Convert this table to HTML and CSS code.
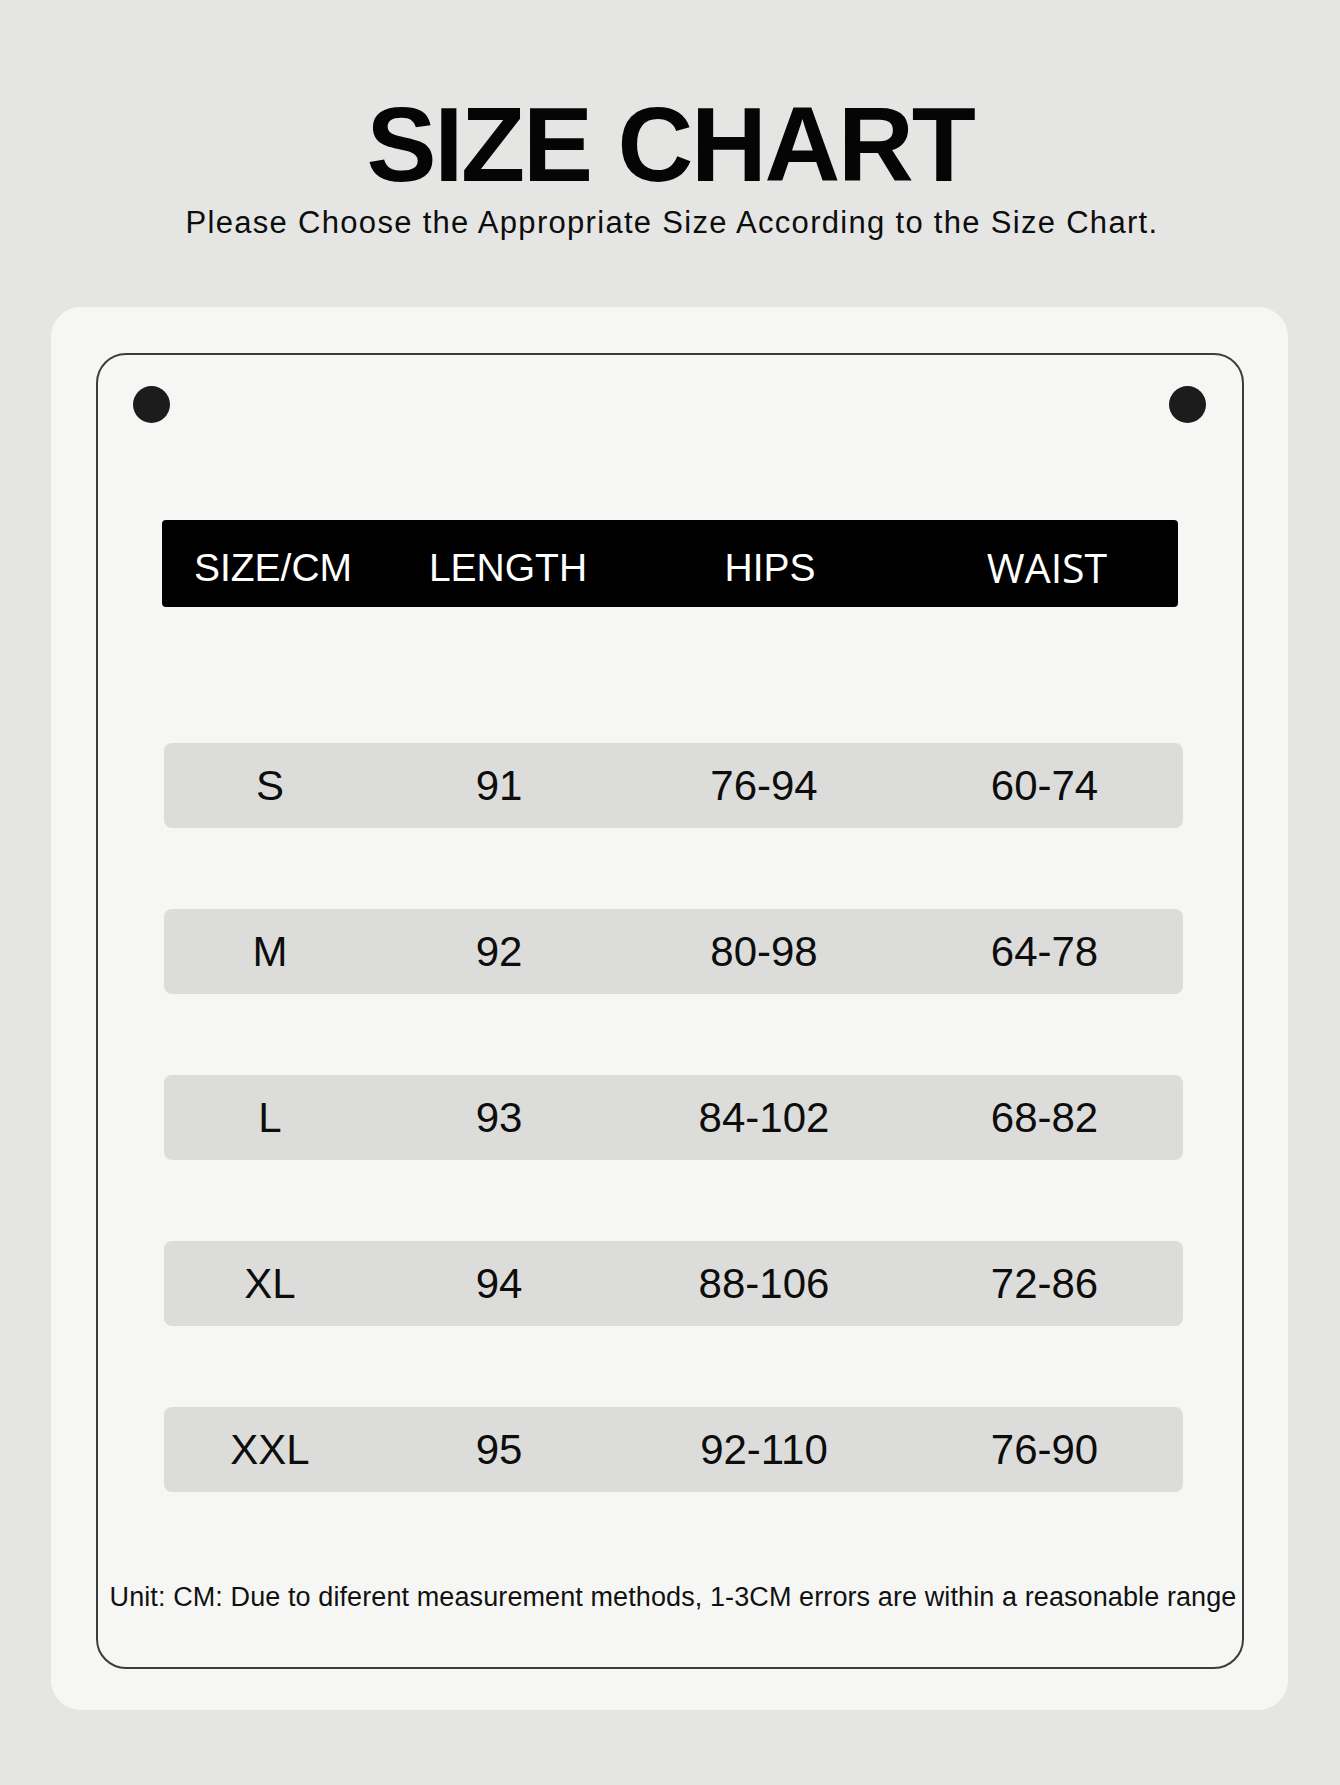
FILE: index.html
```html
<!DOCTYPE html>
<html lang="en">
<head>
<meta charset="utf-8">
<title>Size Chart</title>
<link rel="stylesheet" href="styles.css">
</head>
<body>
<div class="page">
  <h1 class="title">SIZE CHART</h1>
  <p class="subtitle">Please Choose the Appropriate Size According to the Size Chart.</p>
  <div class="card">
    <div class="frame">
      <div class="dots"><span class="dot"></span><span class="dot"></span></div>
      <div class="head">
        <span>SIZE/CM</span>
        <span>LENGTH</span>
        <span>HIPS</span>
        <span class="alt">WAIST</span>
      </div>
      <div class="rows">
        <div class="row"><span>S</span><span>91</span><span>76-94</span><span>60-74</span></div>
        <div class="row"><span>M</span><span>92</span><span>80-98</span><span>64-78</span></div>
        <div class="row"><span>L</span><span>93</span><span>84-102</span><span>68-82</span></div>
        <div class="row"><span>XL</span><span>94</span><span>88-106</span><span>72-86</span></div>
        <div class="row"><span>XXL</span><span>95</span><span>92-110</span><span>76-90</span></div>
      </div>
      <p class="note">Unit: CM: Due to diferent measurement methods, 1-3CM errors are within a reasonable range</p>
    </div>
  </div>
</div>
</body>
</html>
```

FILE: styles.css
```css
html, body {
  margin: 0;
  padding: 0;
}
body {
  background: #e5e6e4;
  font-family: "Liberation Sans", Arial, sans-serif;
  color: #0d0d0d;
  width: 1340px;
  min-height: 1785px;
}
.page {
  padding-top: 92px;
}
.title {
  margin: 0;
  font-size: 105px;
  line-height: 1;
  font-weight: 700;
  letter-spacing: -2.3px;
  text-align: center;
  color: #050505;
}
.subtitle {
  margin: 10px 0 0;
  padding-left: 4px;
  font-size: 31px;
  line-height: 1;
  letter-spacing: 1.3px;
  text-align: center;
  color: #0d0d0d;
}
.card {
  margin: 69px 52px 0 51px;
  padding: 46px 44px 41px 45px;
  background: #f6f7f5;
  border-radius: 30px;
}
.frame {
  border: 2px solid #3c3c3c;
  border-radius: 30px;
  padding: 31px 0 56px;
}
.dots {
  display: flex;
  justify-content: space-between;
  padding: 0 36px 0 35px;
}
.dot {
  width: 37px;
  height: 37px;
  border-radius: 50%;
  background: #1c1c1c;
}
.head {
  margin: 97px 64px 0 64px;
  height: 87px;
  box-sizing: border-box;
  padding-top: 8px;
  background: #000;
  border-radius: 4px;
  display: grid;
  grid-template-columns: 222px 248px 276px 270px;
  align-items: center;
  color: #fff;
  font-size: 39px;
  line-height: 1;
  text-align: center;
}
.head .alt {
  font-family: "Open Sans", "Noto Sans", sans-serif;
  font-size: 41px;
  padding-left: 8px;
}
.rows {
  margin: 136px 59px 0 66px;
  display: flex;
  flex-direction: column;
  gap: 81px;
}
.row {
  height: 85px;
  background: #dcdddb;
  border-radius: 8px;
  display: grid;
  grid-template-columns: 212px 246px 284px 277px;
  align-items: center;
  text-align: center;
  font-size: 42px;
  line-height: 1;
  color: #0d0d0d;
}
.note {
  margin: 92px 0 0;
  padding-left: 6px;
  font-size: 27px;
  line-height: 1;
  letter-spacing: 0.1px;
  text-align: center;
  white-space: nowrap;
  color: #111;
}
```
